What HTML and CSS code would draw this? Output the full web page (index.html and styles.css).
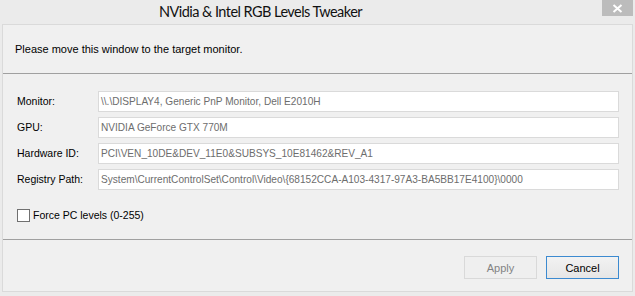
FILE: index.html
```html
<!DOCTYPE html>
<html>
<head>
<meta charset="utf-8">
<link rel="stylesheet" href="styles.css">
</head>
<body>
<div class="window">
  <div class="titlebar">
    <div class="title">NVidia &amp; Intel RGB Levels Tweaker</div>
    <div class="close">
      <svg width="11" height="9" viewBox="0 0 11 9"><path d="M1.5 1 L9.5 8 M9.5 1 L1.5 8" stroke="#fff" stroke-width="2"/></svg>
    </div>
  </div>
  <div class="panel">
    <div class="header">Please move this window to the target monitor.</div>
    <div class="content">
      <div class="grid">
        <div class="label">Monitor:</div>
        <div class="field">\\.\DISPLAY4, Generic PnP Monitor, Dell E2010H</div>
        <div class="label">GPU:</div>
        <div class="field">NVIDIA GeForce GTX 770M</div>
        <div class="label">Hardware ID:</div>
        <div class="field">PCI\VEN_10DE&amp;DEV_11E0&amp;SUBSYS_10E81462&amp;REV_A1</div>
        <div class="label">Registry Path:</div>
        <div class="field">System\CurrentControlSet\Control\Video\{68152CCA-A103-4317-97A3-BA5BB17E4100}\0000</div>
      </div>
      <div class="check">
        <span class="box"></span>
        <span class="check-label">Force PC levels (0-255)</span>
      </div>
    </div>
    <div class="footer">
      <div class="btn disabled">Apply</div>
      <div class="btn default">Cancel</div>
    </div>
  </div>
</div>
</body>
</html>
```

FILE: styles.css
```css
html, body {
  margin: 0;
  padding: 0;
}
body {
  width: 635px;
  height: 296px;
  background: #ebebeb;
  font-family: "Liberation Sans", Arial, sans-serif;
  font-size: 10.5px;
  color: #000;
  overflow: hidden;
}
.window {
  display: flex;
  flex-direction: column;
  height: 296px;
}
.titlebar {
  height: 24px;
  display: flex;
  align-items: flex-start;
}
.title {
  flex: 1;
  padding-left: 159px;
  padding-top: 2px;
  font-family: Lato, "Noto Sans", sans-serif;
  font-size: 14.5px;
  letter-spacing: -0.55px;
  line-height: 19px;
  color: #111;
  white-space: nowrap;
}
.close {
  width: 31px;
  height: 16px;
  margin-right: 2px;
  background: #bcbcbc;
  display: flex;
  align-items: center;
  justify-content: center;
}
.panel {
  margin: 0 2px;
  height: 268px;
  box-sizing: border-box;
  border: 1px solid #dadada;
  background: #f0f0f0;
  display: flex;
  flex-direction: column;
}
.header {
  height: 49px;
  box-sizing: border-box;
  border-bottom: 1px solid #a0a0a0;
  padding-left: 12px;
  padding-top: 17px;
  line-height: 14px;
  font-size: 11px;
}
.content {
  height: 166px;
  box-sizing: border-box;
  border-bottom: 1px solid #a0a0a0;
  padding: 17px 12px 0 14px;
}
.grid {
  display: grid;
  grid-template-columns: 81px 521px;
  grid-auto-rows: 21px;
  row-gap: 5px;
}
.label {
  line-height: 21px;
}
.field {
  box-sizing: border-box;
  border: 1px solid #dadada;
  background: #fff;
  color: #6d6d6d;
  padding-left: 2px;
  font-size: 10.1px;
  line-height: 19px;
  white-space: nowrap;
  overflow: hidden;
}
.check {
  display: flex;
  align-items: center;
  margin-top: 19px;
  height: 13px;
}
.box {
  width: 13px;
  height: 13px;
  box-sizing: border-box;
  border: 1px solid #707070;
  background: #fff;
}
.check-label {
  margin-left: 3px;
  line-height: 13px;
}
.footer {
  flex: 1;
  display: flex;
  justify-content: flex-end;
  align-items: flex-start;
  padding: 16px 13px 0 0;
  gap: 9px;
}
.btn {
  width: 73px;
  height: 23px;
  box-sizing: border-box;
  display: flex;
  align-items: center;
  justify-content: center;
  font-size: 11px;
}
.btn.disabled {
  border: 1px solid #d9d9d9;
  background: #efefef;
  color: #838383;
}
.btn.default {
  border: 1px solid #3c8ad0;
  background: linear-gradient(#f2f2f2, #e6e6e6);
  color: #000;
}
```
